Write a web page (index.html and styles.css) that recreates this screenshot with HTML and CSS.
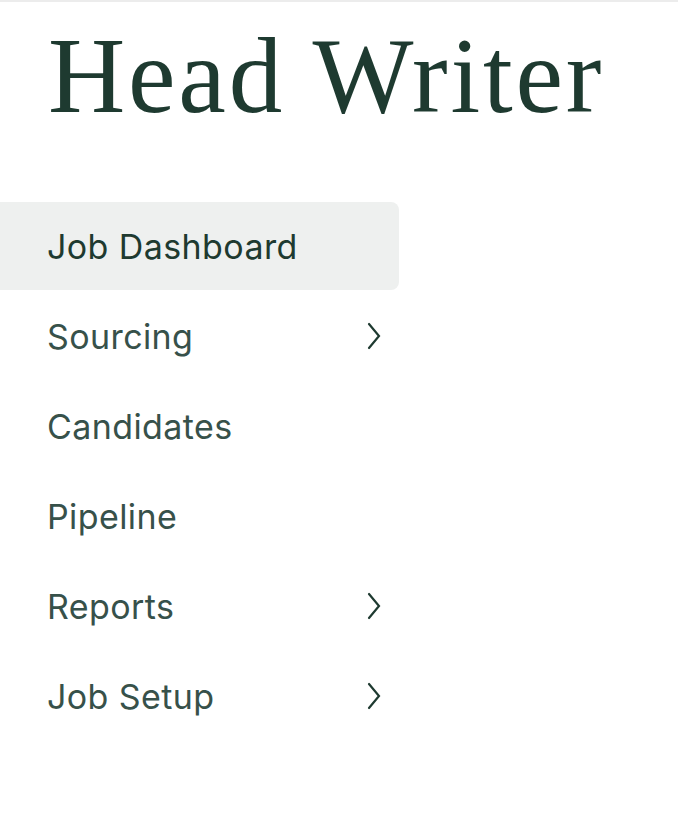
FILE: index.html
```html
<!DOCTYPE html>
<html>
<head>
<meta charset="utf-8">
<link rel="stylesheet" href="styles.css">
</head>
<body>
<div class="page">
  <h1 class="title">Head Writer</h1>
  <nav class="nav">
    <a class="nav-item active">Job Dashboard</a>
    <a class="nav-item">Sourcing
      <svg class="chev" viewBox="0 0 14 28"><path d="M2 2l10 12-10 12"/></svg>
    </a>
    <a class="nav-item">Candidates</a>
    <a class="nav-item">Pipeline</a>
    <a class="nav-item">Reports
      <svg class="chev" viewBox="0 0 14 28"><path d="M2 2l10 12-10 12"/></svg>
    </a>
    <a class="nav-item">Job Setup
      <svg class="chev" viewBox="0 0 14 28"><path d="M2 2l10 12-10 12"/></svg>
    </a>
  </nav>
</div>
</body>
</html>
```

FILE: styles.css
```css
html, body {
  margin: 0;
  padding: 0;
  background: #ffffff;
}
.page {
  border-top: 2px solid #ececec;
  width: 678px;
  height: 822px;
}
.title {
  margin: 0;
  padding: 14px 0 0 48px;
  font-family: "Liberation Serif", "DejaVu Serif", serif;
  font-weight: 400;
  font-size: 107px;
  line-height: 120px;
  letter-spacing: 2.8px;
  color: #1e3a30;
}
.nav {
  display: flex;
  flex-direction: column;
  gap: 2px;
  width: 399px;
  margin-top: 66px;
}
.nav-item {
  display: flex;
  align-items: center;
  justify-content: space-between;
  height: 88px;
  padding: 0 18px 0 47px;
  box-sizing: border-box;
  font-family: "Inter", "Noto Sans", sans-serif;
  font-size: 34px;
  letter-spacing: 0.4px;
  color: #37514a;
  border-radius: 0 8px 8px 0;
}
.nav-item.active {
  background: #eef0ef;
  color: #1e3a30;
}
.chev {
  width: 14px;
  height: 28px;
  fill: none;
  stroke: #1e3a30;
  stroke-width: 2.2;
  stroke-linecap: round;
  stroke-linejoin: miter;
}
```
